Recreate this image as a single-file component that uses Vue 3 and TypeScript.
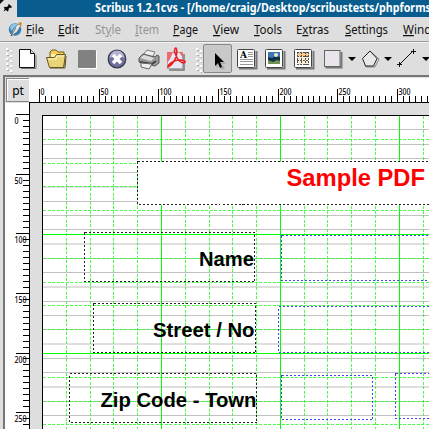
<script setup lang="ts">
interface Menu { key: number; label: string; width: number; disabled?: boolean }
interface Frame { x: number; y: number; w: number; h: number; kind: string; fill?: boolean }

const menus: Menu[] = [
  { key: 0, label: 'File', width: 18 },
  { key: 0, label: 'Edit', width: 21 },
  { key: 2, label: 'Style', width: 26, disabled: true },
  { key: 0, label: 'Item', width: 24, disabled: true },
  { key: 0, label: 'Page', width: 25 },
  { key: 0, label: 'View', width: 26 },
  { key: 0, label: 'Tools', width: 28 },
  { key: 1, label: 'Extras', width: 33 },
  { key: 0, label: 'Settings', width: 43 },
  { key: 0, label: 'Windows', width: 50 },
]

const range = (n: number): number[] => Array.from({ length: n }, (_, i) => i)
const hTicks = range(66).map(i => ({ p: Math.floor(39.6 + i * 5.965), major: i % 10 === 0, value: i * 5 }))
const vTicks = range(53).map(i => ({ p: Math.floor(114.4 + i * 5.965) - 103, major: i % 10 === 0, value: i * 5 }))

const step = 23.79
const columns = range(16).map(i => ({ p: Math.floor(42.5 + (i + 1) * step) - 30, major: (i + 1) % 5 === 0 }))
const rows = range(13).map(i => ({ p: Math.floor(115.6 + (i + 1) * step) - 103, major: (i + 1) % 5 === 0 }))
const baselines = range(21).map(i => {
  const y = 115.7 + (i + 1) * 14.28
  const soft = y % 1 < 0.22
  return { p: Math.floor(y) - 103 - (soft ? 1 : 0), soft }
})

const frames: Frame[] = [
  { x: 137, y: 161, w: 320, h: 43, kind: 'dark', fill: true },
  { x: 84, y: 232, w: 170, h: 49, kind: 'dark' },
  { x: 93, y: 303, w: 162, h: 49, kind: 'dark' },
  { x: 69, y: 373, w: 187, h: 49, kind: 'dark' },
  { x: 281, y: 235, w: 170, h: 45, kind: 'blue' },
  { x: 278, y: 306, w: 170, h: 46, kind: 'blue' },
  { x: 281, y: 375, w: 91, h: 44, kind: 'blue' },
  { x: 395, y: 373, w: 80, h: 45, kind: 'blue' },
]
</script>

<template>
  <div class="window">
    <header class="titlebar">
      <svg class="pin" width="17" height="17" viewBox="0 0 17 17">
        <path d="M0 0h4L0 4z" fill="#111" />
        <path d="M9 4l3 3-1 1-1-.5-1.5 1.500 0 1.800-1 .7-1.500-1.500L3.500 11.500 4.800 9 3.800 7.800l1-1 2 .1L8.500 5.500 8 5z" fill="#000" />
      </svg>
      <svg class="caption" width="412" height="17">
        <text x="78" y="12" textLength="336" lengthAdjust="spacingAndGlyphs">Scribus 1.2.1cvs - [/home/craig/Desktop/scribustests/phpforms</text>
      </svg>
    </header>

    <nav class="menubar">
      <svg class="logo" width="16" height="16" viewBox="0 0 16 16">
        <circle cx="7" cy="7.500" r="6.200" fill="#347caf" />
        <path d="M2 5a6 6 0 0 1 8-3L3 9z" fill="#8cc5e7" />
        <path d="M3 14L5 8 10 2l3 1-4 7z" fill="#e8e8e4" stroke="#536575" stroke-width=".6" />
        <path d="M10 2l2-2 2 1-1 3z" fill="#d98a2b" />
        <path d="M3 14l5-8" stroke="#345" stroke-width=".7" />
      </svg>
      <svg v-for="m in menus" :key="m.label" class="menu" :class="{ disabled: m.disabled }" :width="m.width + 2" height="24">
        <text x="0" y="17" :textLength="m.width" lengthAdjust="spacingAndGlyphs">{{ m.label.slice(0, m.key) }}<tspan class="key">{{ m.label[m.key] }}</tspan>{{ m.label.slice(m.key + 1) }}</text>
      </svg>
    </nav>

    <div class="toolbar">
      <svg class="grip" width="8" height="30" viewBox="0 0 8 30">
        <g v-for="i in 5" :key="i"><path :d="`M0 ${i * 5}h2M4 ${i * 5 + 2}h2`" stroke="#fff" stroke-width="2" /><path :d="`M1 ${i * 5 + 1.500}h2M5 ${i * 5 + 3.500}h1`" stroke="#aaa" /></g>
      </svg>
      <svg width="18" height="30" viewBox="0 0 18 30">
        <path d="M2 24.500h15V11" fill="none" stroke="#777" />
        <path d="M.5 5.500h11l4 4v14H.5z" fill="#fff" stroke="#111" />
        <path d="M11.500 5.500v4h4" fill="#ddd" stroke="#111" />
      </svg>
      <svg width="22" height="30" viewBox="0 0 22 30">
        <path d="M4 12l0-4 2-2h4l2 2h6v14H4z" fill="#f5cf58" stroke="#775819" />
        <path d="M5 10h12v4H5z" fill="#fff4aa" />
        <path d="M.5 13.500h8l2-3h9l-2 13H3.500z" fill="#ead477" stroke="#665728" />
        <path d="M2 15h8l1-3h7" fill="none" stroke="#fff8c5" />
        <path d="M4 24h15l1-12" fill="none" stroke="#604c25" />
      </svg>
      <svg width="20" height="30" viewBox="0 0 20 30">
        <rect x="1" y="7" width="18" height="18" fill="#fff" /><rect x="0" y="6" width="18" height="18" rx="1" fill="#818181" />
      </svg>
      <svg width="21" height="30" viewBox="0 0 21 30">
        <circle cx="10" cy="15" r="8.800" fill="#6f7199" stroke="#343650" stroke-width="1.200" />
        <path d="M2.500 14a7.500 7.500 0 0 1 15 0q-7-4-15 0z" fill="#b2b4cf" />
        <path d="M6 11l8 8M14 11l-8 8" stroke="#fff" stroke-width="3.500" />
      </svg>
      <svg width="22" height="30" viewBox="0 0 22 30">
        <path d="M5 11L9 6l8 2-3 6z" fill="#eee" stroke="#777" />
        <path d="M1 14l4-4 12 3 2-2 2 1v7l-4 3L1 18z" fill="#999" stroke="#555" />
        <path d="M2 14l4-3 10 3-3 3z" fill="#ddd" />
        <path d="M2 18l12 2 4-3" fill="none" stroke="#444" stroke-width="2" />
        <path d="M3 19l11 1-3 5-8-2z" fill="#eee" stroke="#666" />
      </svg>
      <svg width="20" height="30" viewBox="0 0 20 30">
        <path d="M2 26h15V10" fill="none" stroke="#777" stroke-width="1.500" />
        <path d="M.5 8.500h15v16H.5z" fill="#e4e9f5" stroke="#aaa" />
        <path d="M0 8h6L3 15 0 19zM12 8h4v6z" fill="#f0686c" />
        <path d="M1 23C7 20 11 11 9.500 5 9 2.500 6.500 5 8 9c2 6 5 10 9 10 3-1 0-3-4-3-6 0-12 4-12 7z" fill="none" stroke="#ef1c22" stroke-width="1.500" />
      </svg>
      <svg class="grip" width="8" height="30" viewBox="0 0 8 30">
        <g v-for="i in 5" :key="i"><path :d="`M0 ${i * 5}h2M4 ${i * 5 + 2}h2`" stroke="#fff" stroke-width="2" /><path :d="`M1 ${i * 5 + 1.500}h2M5 ${i * 5 + 3.500}h1`" stroke="#aaa" /></g>
      </svg>
      <div class="active">
        <svg width="27" height="27" viewBox="0 0 27 27"><path d="M12 9v14l3-3 3 5 3-2-3-4h4z" fill="#aaa" /><path d="M11 8v13l3-3 2 5 2-1-2-5h4z" fill="#000" /></svg>
      </div>
      <svg width="21" height="30" viewBox="0 0 21 30">
        <path d="M2 24.500h17.500V7" fill="none" stroke="#777" stroke-width="2" />
        <rect x=".5" y="5.500" width="17" height="18" rx="1" fill="#fff" stroke="#444" />
        <text class="glyph" x="3" y="14">A</text>
        <path d="M11 8.500h5M11 10.500h5M11 12.500h5M3 15.500h13M3 17.500h13M3 20.500h13" stroke="#999" />
      </svg>
      <svg width="21" height="30" viewBox="0 0 21 30">
        <path d="M2 24.500h17.500V7" fill="none" stroke="#777" stroke-width="2" />
        <rect x=".5" y="5.500" width="17" height="18" rx="1" fill="#fff" stroke="#444" />
        <rect x="3" y="8" width="12" height="12" fill="#3e76b2" />
        <path d="M3 13l4 1 3-2 5 1v7H3z" fill="#103248" /><path d="M3 16l5 2 4-2 3 1v3H3z" fill="#719252" /><circle cx="11" cy="11" r="2" fill="#e9edcc" />
      </svg>
      <svg width="21" height="30" viewBox="0 0 21 30">
        <path d="M2 24.500h17.500V7" fill="none" stroke="#777" stroke-width="2" />
        <rect x=".5" y="5.500" width="17" height="18" rx="1" fill="#fff" stroke="#444" />
        <rect x="3" y="8" width="12" height="13" fill="#f9ecd8" /><rect x="3" y="8" width="12" height="4" fill="#f9c68b" />
        <path d="M3 8.500h12M3 12.500h12M3 16.500h12M3 20.500h12M3.500 8v13M7.500 8v13M11.500 8v13M14.500 8v13" stroke="#57524f" stroke-dasharray="2 1" />
      </svg>
      <svg width="32" height="30" viewBox="0 0 32 30">
        <path d="M1.500 23.500h16V8" fill="none" stroke="#777" stroke-width="2" />
        <rect x=".5" y="6.500" width="15.500" height="16" fill="#eae5ec" stroke="#666" />
        <path d="M24 13h8l-4 4z" />
      </svg>
      <svg width="30" height="30" viewBox="0 0 30 30">
        <path d="M2 15l2 8h9l4-8-8-7z" fill="none" stroke="#888" />
        <path d="M.5 14.500l3 7.500h8l3.500-7.500L8 7z" fill="#e8e8e8" stroke="#222" />
        <path d="M22 13h8l-4 4z" />
      </svg>
      <svg width="34" height="30" viewBox="0 0 34 30">
        <path d="M2 21L16 7M0 20.500h5M2.500 18v5M14 7.500h5M16.500 5v5" stroke="#111" />
        <path d="M25 13h8l-4 4z" />
      </svg>
    </div>

    <main class="workspace">
      <div class="unit"><span>pt</span></div>
      <svg class="ruler-h" width="400" height="25" viewBox="29 78 400 25" shape-rendering="crispEdges">
        <rect x="29" y="102" width="400" height="1" />
        <template v-for="t in hTicks" :key="t.p">
          <rect :x="t.p" :y="t.major ? 89 : 96" width="1" :height="t.major ? 14 : 6" />
          <text v-if="t.major" :x="t.p + 1.500" y="95" :textLength="String(t.value).length * 4" lengthAdjust="spacingAndGlyphs">{{ t.value }}</text>
        </template>
      </svg>
      <svg class="ruler-v" width="25" height="326" viewBox="0 0 25 326" shape-rendering="crispEdges">
        <rect x="24" y="0" width="1" height="326" />
        <template v-for="t in vTicks" :key="t.p">
          <rect :x="t.major ? 11 : 18" :y="t.p" :width="t.major ? 13 : 6" height="1" />
          <text v-if="t.major" x="9.500" :y="t.p + 10" :textLength="String(t.value).length * 4" lengthAdjust="spacingAndGlyphs">{{ t.value }}</text>
        </template>
      </svg>
      <svg class="canvas" width="399" height="326" viewBox="0 0 399 326">
        <g shape-rendering="crispEdges">
          <rect x="12" y="12" width="400" height="330" fill="#fff" />
          <rect v-for="b in baselines" :key="b.p" x="13" :y="b.p" width="390" :height="b.soft ? 2 : 1" :fill="b.soft ? '#dfdfdf' : '#c2c2c2'" />
          <path v-for="c in columns.filter(l => !l.major)" :key="'c' + c.p" :d="`M${c.p + 0.500} 13V326`" class="minor" />
          <path v-for="r in rows.filter(l => !l.major)" :key="'r' + r.p" :d="`M13 ${r.p + 0.500}H399`" class="minor" />
          <path v-for="c in columns.filter(l => l.major)" :key="'C' + c.p" :d="`M${c.p + 0.500} 13V326`" class="major" />
          <path v-for="r in rows.filter(l => l.major)" :key="'R' + r.p" :d="`M13 ${r.p + 0.500}H399`" class="major" />
          <path d="M12.500 326V12.500H399" fill="none" stroke="#000" />
        </g>
        <g transform="translate(-30 -103)">
          <rect v-for="(f, i) in frames" :key="i" :x="f.x + 0.500" :y="f.y + 0.500" :width="f.w" :height="f.h" :class="['frame', f.kind, { filled: f.fill }]" shape-rendering="crispEdges" />
          <text class="heading" x="286.500" y="186" textLength="138.500" lengthAdjust="spacingAndGlyphs">Sample PDF</text>
          <text class="label" x="199" y="265.500" textLength="55" lengthAdjust="spacingAndGlyphs">Name</text>
          <text class="label" x="153" y="336.700" textLength="101.500" lengthAdjust="spacingAndGlyphs">Street / No</text>
          <text class="label" x="100.500" y="407" textLength="156" lengthAdjust="spacingAndGlyphs">Zip Code - Town</text>
        </g>
      </svg>
    </main>
  </div>
</template>

<style>
body { margin: 0; overflow: hidden; }
</style>

<style scoped>
.window { width: 429px; height: 429px; overflow: hidden; background: #dedede; display: flex; flex-direction: column; font-family: "Noto Sans", "Liberation Sans", sans-serif; }
svg { display: block; flex: none; }
.titlebar { height: 17px; display: flex; flex: none; }
.caption { background: #085d8e; fill: #fff; font: bold 11.5px "Noto Sans", sans-serif; }
.menubar { height: 25px; flex: none; display: grid; grid-template-columns: 18px 32px 37px 40px 38px 40px 41px 42px 49px 58px 50px; padding-left: 8px; border-bottom: 1px solid #999; box-sizing: border-box; }
.logo { margin-top: 5px; }
.menu { font-size: 12.5px; fill: #111; overflow: visible; }
.menu.disabled { fill: #949494; }
.key { text-decoration: underline; }
.toolbar { height: 33px; flex: none; display: grid; grid-template-columns: 13px 27px 32px 29px 31px 29px 29px 7px 34px 28px 29px 30px 38px 35px 34px; align-items: start; padding: 1px 0 0 6px; box-sizing: border-box; border-top: 1px solid #f4f4f4; }
.active { width: 27px; height: 27px; border: 1px solid #888; border-radius: 2px; background: #c9c9c9; }
.glyph { font: bold 9px "DejaVu Serif", serif; }
.workspace { height: 354px; flex: none; box-sizing: border-box; border-top: 2px solid #777; border-left: 2px solid #777; margin-left: 3px; display: grid; grid-template: 26px 326px / 25px 399px; }
.unit { width: 22px; height: 22px; margin: 1px; border: 1px solid #888; box-shadow: inset 1px 1px #fff; background: #dedede; display: flex; align-items: center; justify-content: center; font-size: 12px; }
.ruler-h { margin: 1px 0 0 -1px; background: #fff; }
.ruler-v { background: #fff; }
.ruler-h text, .ruler-v text { font: 500 8.5px "Noto Sans", sans-serif; }
.canvas { background: #dedede; }
.major { stroke: #00ff00; }
.minor { stroke: #22fa22; stroke-dasharray: 3 1.5; stroke-opacity: .8; }
.frame { fill: none; stroke-dasharray: 2 2; }
.filled { fill: #fff; }
.dark { stroke: #222; }
.blue { stroke: #4545f5; }
.heading { font: bold 24px "Liberation Sans", sans-serif; fill: #f00; }
.label { font: bold 20px "Liberation Sans", sans-serif; }
</style>
